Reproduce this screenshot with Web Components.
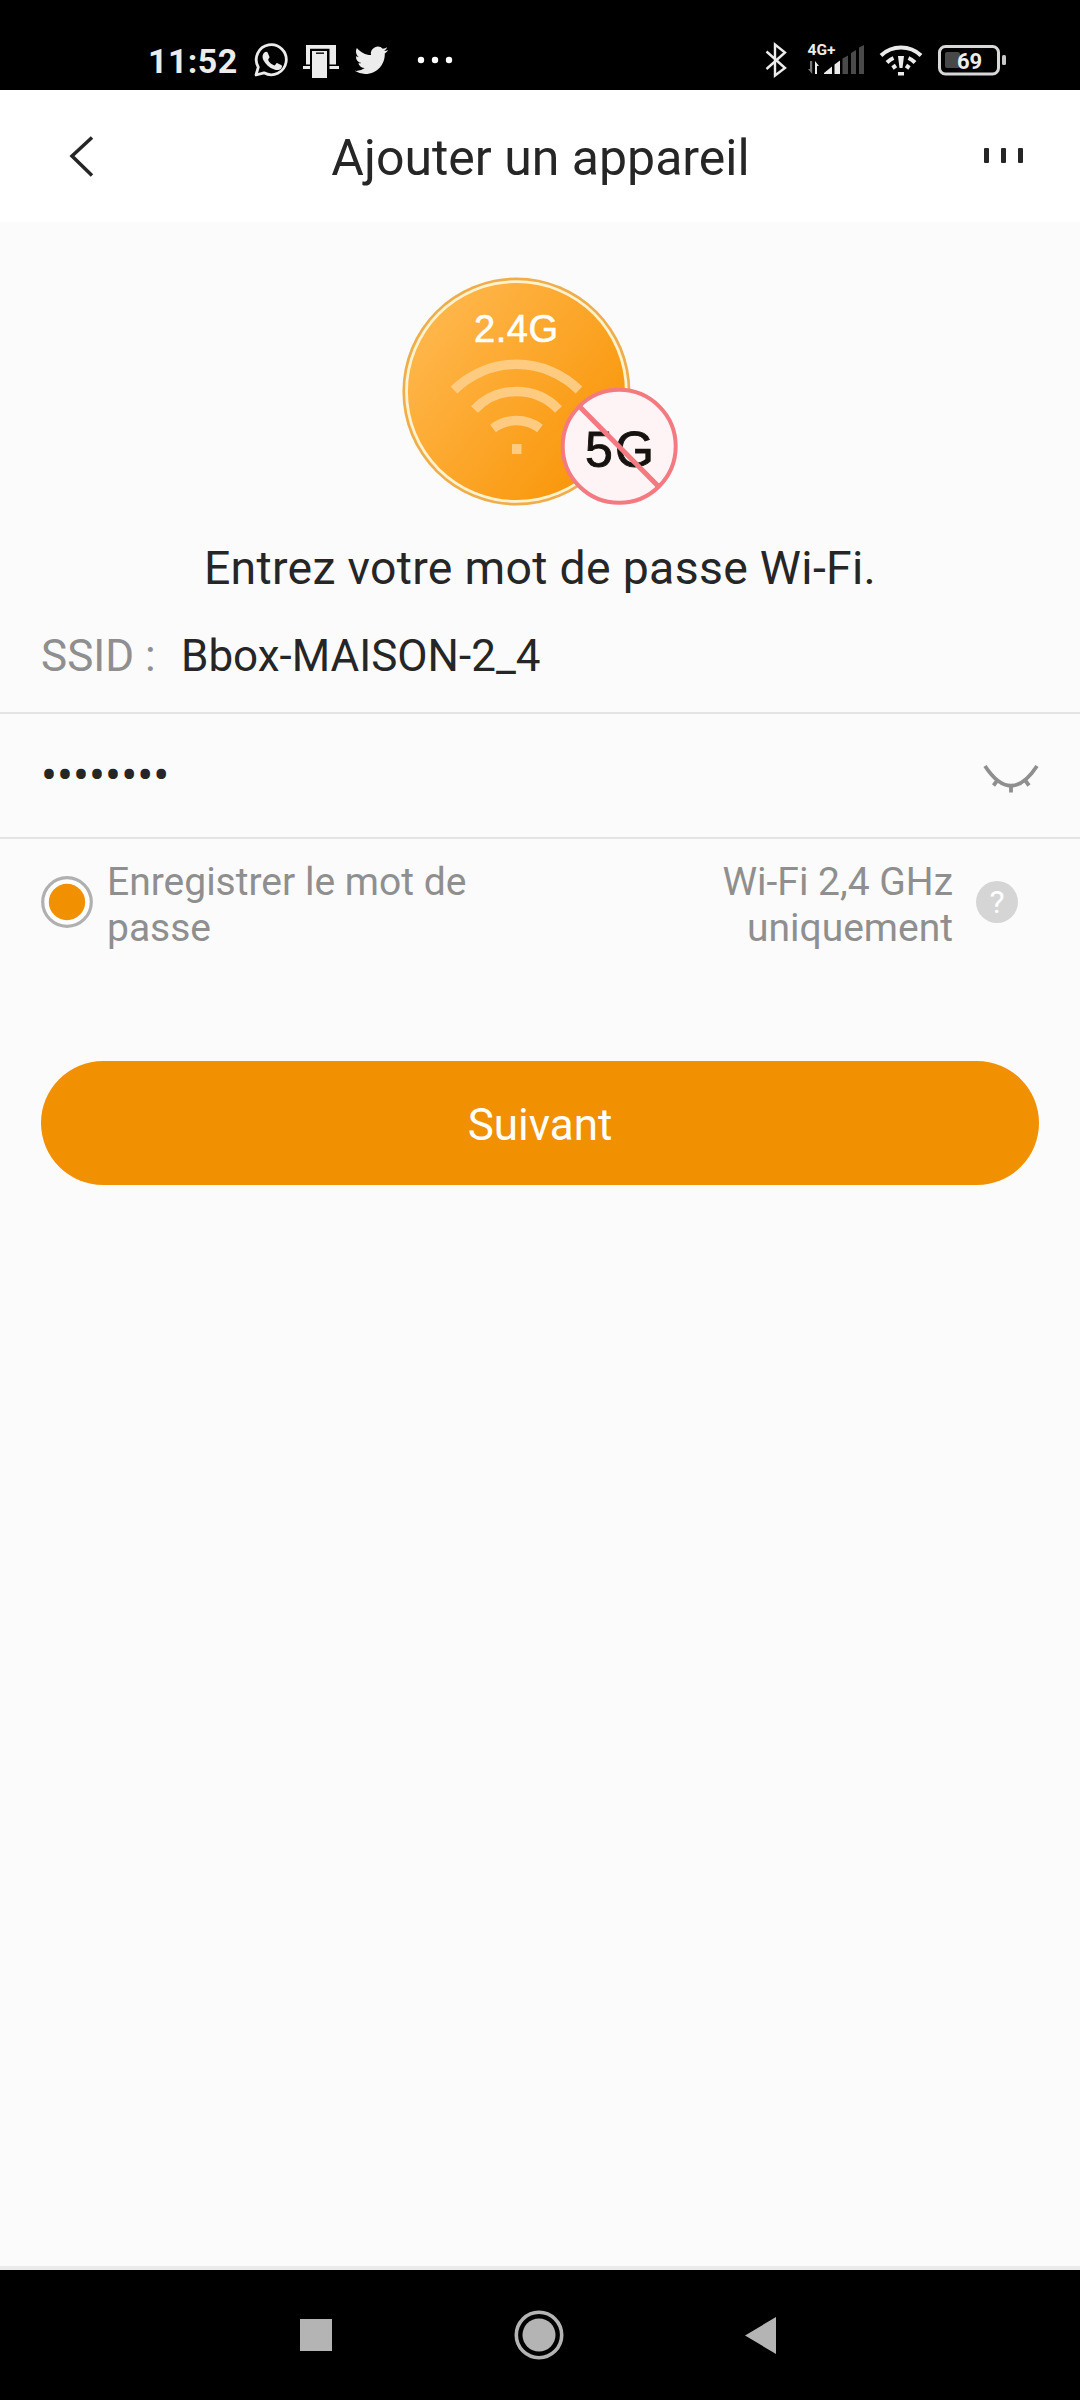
<!DOCTYPE html>
<html lang="fr">
<head>
<meta charset="UTF-8">
<title>Ajouter un appareil</title>
<style>
    body {
        margin: 0;
        background: #fbfbfb;
        font-family: Roboto, "Liberation Sans", sans-serif;
        color: #262626;
    }
</style>
</head>
<body>
<app-screen>
    <status-bar slot="top" time="11:52"></status-bar>
    <nav-header slot="top">Ajouter un appareil</nav-header>
    <wifi-badge></wifi-badge>
    <page-title>Entrez votre mot de passe Wi-Fi.</page-title>
    <ssid-row label="SSID :">Bbox-MAISON-2_4</ssid-row>
    <password-row>••••••••</password-row>
    <option-row>
        <span slot="save">Enregistrer le mot de passe</span>
        <span slot="hint">Wi-Fi 2,4 GHz uniquement</span>
    </option-row>
    <main-button>Suivant</main-button>
    <system-nav slot="bottom"></system-nav>
</app-screen>

<script>
    // Define un custom element con su contenido en un Shadow DOM
    function definir(nombre, plantilla) {
        customElements.define(nombre, class extends HTMLElement {
            constructor() {
                super();
                this.attachShadow({ mode: 'open' });
            }

            connectedCallback() {
                this.shadowRoot.innerHTML = plantilla(this);
            }
        });
    }

    // Pantalla completa
    definir('app-screen', () => `
        <style>
            :host { display: flex; flex-direction: column; width: 1080px; height: 2400px; overflow: hidden; }
            main { flex: 1; display: flex; flex-direction: column; }
        </style>
        <slot name="top"></slot>
        <main><slot></slot></main>
        <slot name="bottom"></slot>
    `);

    // Barra de estado
    definir('status-bar', (el) => `
        <style>
            :host { display: flex; justify-content: space-between; height: 90px; box-sizing: border-box; padding: 40px 72px 0 148px; background: #000; color: #ececec; }
            div { display: flex; height: 40px; align-items: center; }
            svg { display: block; overflow: visible; }
            .hora { font-size: 34px; font-weight: 700; line-height: 40px; width: 90px; letter-spacing: 0.4px; padding-top: 1px; }
        </style>
        <div>
            <span class="hora">${el.getAttribute('time')}</span>
            <svg width="150" height="40" viewBox="248 40 150 40" style="margin-left:10px">
                <path fill="none" stroke="#ececec" stroke-width="2.8" stroke-linejoin="round" d="M256 75 L258.3 67.2 A15 15 0 1 1 264 72.8 Z"/>
                <path fill="#ececec" d="M264.7 52.3c.7-.7 2.2-.8 2.8 0l2 4.6c.2.9-1.6 2.4-1.4 3 1.5 2.8 3.6 4.5 6.3 5.5.8.2 1.8-2.3 2.6-2.3l4.6 2.2c.8.6.2 2.6-.6 3.4-1.7 1.5-4.2 1.7-6.6.8-5.3-1.9-8.8-5.2-11.1-9.6-1.3-2.7-1-5.8 1.4-7.6z"/>
                <path fill="#ececec" d="M306 45h30v19.500h-6.500V48.800h-19.500v15.700h-4z"/>
                <path fill="#ececec" d="M303 66h7v3h-7zM329.500 66h9.500v3h-9.500z"/>
                <path fill="#ececec" d="M312 51h15v27h-15z"/>
                <path stroke="#222" stroke-width="1.6" d="M316 53.200h8"/>
                <path fill="#ececec" transform="translate(354.6 43.5) scale(1.4)" d="M23.953 4.57a10 10 0 01-2.825.775 4.958 4.958 0 002.163-2.723c-.951.555-2.005.959-3.127 1.184a4.92 4.92 0 00-8.384 4.482C7.69 8.095 4.067 6.13 1.64 3.162a4.822 4.822 0 00-.666 2.475c0 1.71.87 3.213 2.188 4.096a4.904 4.904 0 01-2.228-.616v.06a4.923 4.923 0 003.946 4.827 4.996 4.996 0 01-2.212.085 4.936 4.936 0 004.604 3.417 9.867 9.867 0 01-6.102 2.105c-.39 0-.779-.023-1.17-.067a13.995 13.995 0 007.557 2.209c9.053 0 13.998-7.496 13.998-13.985 0-.21 0-.42-.015-.63A9.935 9.935 0 0024 4.59z"/>
            </svg>
            <svg width="36" height="40" viewBox="417 40 36 40" style="margin-left:19px" fill="#fff">
                <circle cx="421" cy="60" r="3.2"/><circle cx="435" cy="60" r="3.2"/><circle cx="449" cy="60" r="3.2"/>
            </svg>
        </div>
        <div>
            <svg width="248" height="40" viewBox="760 40 248 40" fill="#ececec">
                <path fill="none" stroke="#ececec" stroke-width="2.4" d="M766.5 51.5 L785 68 L775 75.5 V44.5 L785 52.5 L766.5 69"/>
                <text x="807.5" y="55" font-size="15.500" font-weight="700" textLength="28">4G+</text>
                <path fill="#777" d="M808 69h2V61h2.2v13z"/>
                <path d="M815 61l4 5h-2v8h-2z"/>
                <path d="M824 74v-1l8-6.5V74zM834.5 74V64.5l5.5-4V74z"/>
                <path fill="#4a4a4a" d="M842.5 74V58.5l5.5-3V74zM851 74V53l5-3V74zM859 74V47.5l5-2.5V74z"/>
                <g fill="none" stroke="#ececec" stroke-width="4">
                    <path d="M881 55.5 A29 29 0 0 1 921 55.5"/>
                    <path d="M887 62.5 Q890 59.5 893.5 58M908.5 58 Q912 59.5 915 62.5"/>
                    <path d="M892.5 68 l3.500-2.500M906 65.5 l3.500 2.500"/>
                </g>
                <path d="M898 56h6l-1.500 12h-3zM898 72h6v3.500h-6z"/>
                <rect x="939.5" y="46.5" width="59" height="27.5" rx="6" fill="none" stroke="#d8d8d8" stroke-width="3"/>
                <rect x="945" y="52" width="15" height="16" rx="2" fill="#484848"/>
                <rect x="1002" y="55" width="4" height="10" rx="1.5" fill="#c8c8c8"/>
                <text x="957" y="68.500" font-size="22" font-weight="700" textLength="25">69</text>
            </svg>
        </div>
    `);

    // Cabecera con flecha y menú
    definir('nav-header', () => `
        <style>
            :host { display: flex; align-items: center; justify-content: space-between; height: 132px; box-sizing: border-box; padding: 0 55px 0 68px; background: #fff; }
            h1 { margin: 3px 12px 0 0; font-size: 50px; font-weight: 400; line-height: 60px; white-space: nowrap; }
            svg { display: block; }
        </style>
        <svg width="42" height="44" viewBox="68 134 42 44"><path d="M92 137.5 L72 156 L92 175.5" fill="none" stroke="#262626" stroke-width="3.5"/></svg>
        <h1><slot></slot></h1>
        <svg width="42" height="20" viewBox="983 146 42 20" fill="#262626">
            <rect x="984" y="148" width="5" height="15" rx="1"/><rect x="1001" y="148" width="5" height="15" rx="1"/><rect x="1018" y="148" width="5" height="15" rx="1"/>
        </svg>
    `);

    // Ilustración 2.4G / 5G
    definir('wifi-badge', () => `
        <style>
            :host { display: flex; justify-content: center; padding-top: 38px; }
            svg { display: block; font-family: "Liberation Sans", sans-serif; }
        </style>
        <svg width="320" height="260" viewBox="0 0 320 260">
            <defs>
                <linearGradient id="naranja" x1="0" y1="0.2" x2="0.9" y2="0.9">
                    <stop offset="0" stop-color="#ffb84e"/>
                    <stop offset="1" stop-color="#f99507"/>
                </linearGradient>
            </defs>
            <circle cx="136.4" cy="131.5" r="114" fill="#efad4b"/>
            <circle cx="136.4" cy="131.5" r="111.3" fill="#fff3cf"/>
            <circle cx="136.4" cy="131.5" r="108.5" fill="url(#naranja)"/>
            <text x="94" y="81.7" font-size="38" fill="#fff" stroke="#fff" stroke-width="0.6" textLength="84">2.4G</text>
            <g fill="none" stroke="#ffcb80" stroke-width="9.5">
                <path d="M74 130 A89 89 0 0 1 199 130"/>
                <path d="M94.5 149.5 A58 58 0 0 1 178.5 149.5"/>
                <path d="M113 168.5 A39 39 0 0 1 160 168.5"/>
            </g>
            <rect x="132" y="184" width="9.5" height="10" fill="#ffcb80"/>
            <circle cx="239.2" cy="186.3" r="56.5" fill="#fff4f5" stroke="#f37a80" stroke-width="4"/>
            <text x="205" y="207" font-size="50" fill="#15120f" stroke="#15120f" stroke-width="0.9" textLength="69">5G</text>
            <path d="M199 146 L279 227" stroke="#f37a80" stroke-width="5"/>
        </svg>
    `);

    definir('page-title', () => `
        <style>
            :host { display: block; margin-top: 17px; font-size: 46.4px; line-height: 62px; text-align: center; white-space: nowrap; letter-spacing: 0.3px; }
        </style>
        <slot></slot>
    `);

    // Red wifi
    definir('ssid-row', (el) => `
        <style>
            :host { display: flex; height: 115px; box-sizing: border-box; padding: 27px 41px 0; border-bottom: 2px solid #e4e4e4; font-size: 44px; line-height: 60px; white-space: nowrap; }
            label { width: 140px; color: #8f8f8f; }
        </style>
        <label>${el.getAttribute('label')}</label>
        <span><slot></slot></span>
    `);

    // Contraseña oculta
    definir('password-row', () => `
        <style>
            :host { display: flex; align-items: center; justify-content: space-between; height: 125px; box-sizing: border-box; padding: 0 41px; border-bottom: 2px solid #e4e4e4; }
            span { font-size: 47.5px; line-height: 60px; }
            svg { display: block; margin-top: 6px; }
        </style>
        <span><slot></slot></span>
        <svg width="56" height="30" viewBox="983 764 56 30" fill="none" stroke="#8f8f8f" stroke-width="3.8">
            <path d="M985 766 Q1011 805.5 1037 766"/>
            <path d="M998 779.5 l-4.500 6M1011 786 v6.500M1024.500 779.5 l4.500 6"/>
        </svg>
    `);

    // Opciones
    definir('option-row', () => `
        <style>
            :host { display: flex; align-items: center; height: 126px; padding: 0 62px 0 41px; font-size: 39px; line-height: 46px; color: #8f8f8f; }
            svg { display: block; flex: none; }
            .guardar { width: 400px; margin-left: 14px; padding-top: 6px; }
            .aviso { width: 260px; margin-left: auto; margin-right: 23px; padding-top: 6px; text-align: right; }
        </style>
        <svg width="52" height="52" viewBox="0 0 52 52">
            <circle cx="26" cy="26" r="24.3" fill="#fff" stroke="#b0b0b0" stroke-width="3.2"/>
            <circle cx="26" cy="26" r="18.2" fill="#f19000"/>
        </svg>
        <div class="guardar"><slot name="save"></slot></div>
        <div class="aviso"><slot name="hint"></slot></div>
        <svg width="42" height="42" viewBox="0 0 42 42">
            <circle cx="21" cy="21" r="21" fill="#d5d5d5"/>
            <text x="21" y="32" font-size="32" fill="#fff" text-anchor="middle">?</text>
        </svg>
    `);

    definir('main-button', () => `
        <style>
            :host { display: flex; margin: 96px 41px 0; }
            button { flex: 1; height: 124px; padding: 4px 0 0; border: 0; border-radius: 62px; background: #f19000; color: #fff; font: 400 44px Roboto, sans-serif; }
        </style>
        <button><slot></slot></button>
    `);

    // Botones de navegación del sistema
    definir('system-nav', () => `
        <style>
            :host { display: flex; align-items: center; justify-content: space-between; height: 130px; box-sizing: border-box; padding: 0 304px 0 300px; background: #000; box-shadow: 0 -4px 0 #ebebeb; }
            svg { display: block; }
        </style>
        <svg width="32" height="32"><rect width="32" height="32" fill="#b4b4b4"/></svg>
        <svg width="50" height="50" viewBox="0 0 50 50">
            <circle cx="25" cy="25" r="22.7" fill="none" stroke="#b4b4b4" stroke-width="3.6"/>
            <circle cx="25" cy="25" r="16.5" fill="#b4b4b4"/>
        </svg>
        <svg width="31" height="37" viewBox="0 0 31 37"><path d="M0 18.5 L31 0 V37 Z" fill="#b4b4b4"/></svg>
    `);
</script>
</body>
</html>
